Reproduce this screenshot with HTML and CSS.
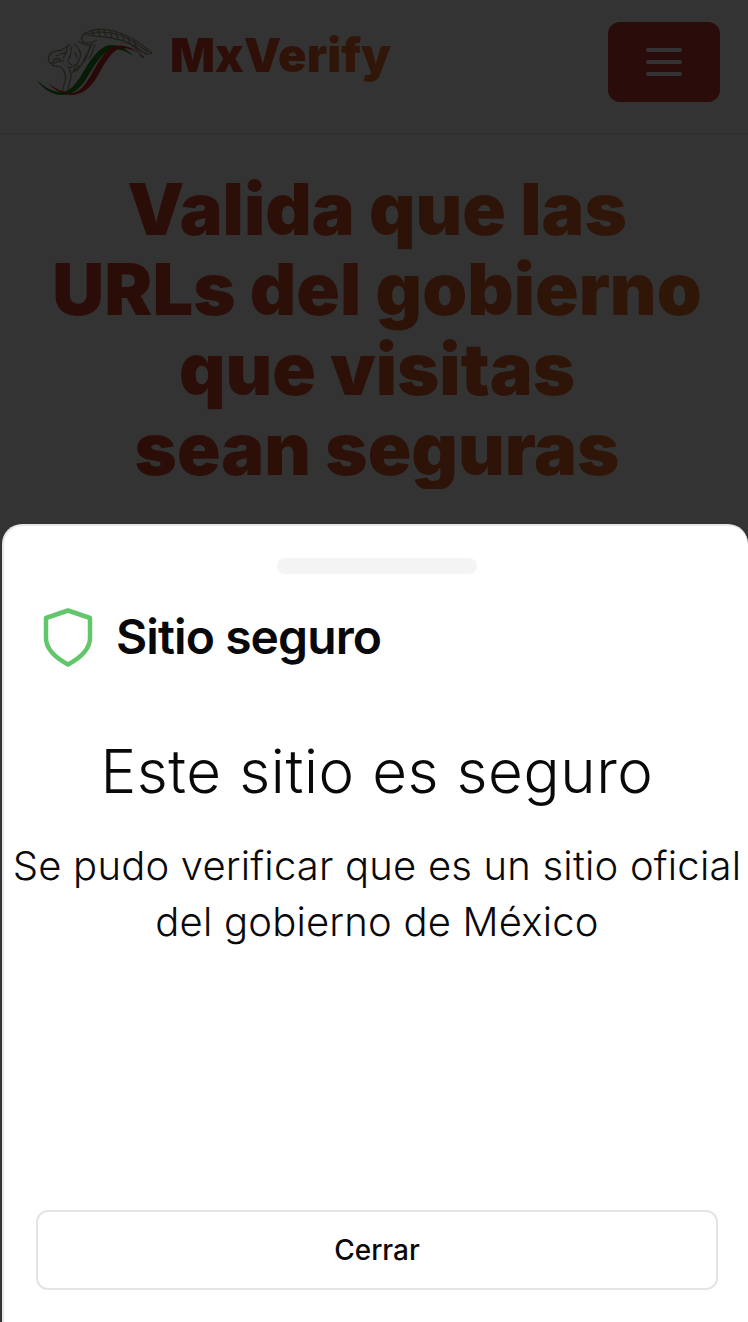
FILE: index.html
```html
<!DOCTYPE html>
<html lang="es">
<head>
<meta charset="utf-8">
<title>MxVerify</title>
<link rel="stylesheet" href="styles.css">
</head>
<body>
<div class="page">
  <header class="nav">
    <div class="brand">
      <svg class="logo" width="116" height="68" viewBox="36 28 116 68" fill="none" aria-hidden="true">
        <g class="eagle">
          <path d="M84 34C92 29 104 28 114 31C128 35 142 44 152 53C150 54 148 54 146 54C136 46 124 40 112 38C102 36 92 37 84 34Z"/>
          <path d="M88 34C98 31 110 32 122 36C132 40 140 46 148 52"/>
          <path d="M92 31L94 36M98 30L100 36M104 30L106 37M110 31L112 38M116 32L118 39M122 34L124 41M128 37L130 44M134 40L136 47"/>
          <path d="M139 55L144 58M131 44C136 48 140 52 144 58"/>
          <path d="M84 34C80 38 81 42 86 43C90 44 92 42 97 40"/>
          <path d="M78 41C84 45 89 46 92 44C90 50 86 54 84 60C82 65 79 68 76 72"/>
          <path d="M74 44C79 48 82 52 80 58C78 63 75 67 73 72C76 70 78 68 79 65"/>
          <path d="M90 46C88 52 88 56 84 62M95 44C93 50 92 54 89 59"/>
          <path d="M70 44C67 48 64 47 62 50C58 51 54 50 51 53C48 56 48 60 50 63C52 64 54 62 54 60C56 58 60 58 60 60C57 62 54 63 52 65C54 67 58 66 61 67"/>
          <path d="M72 46C70 51 72 54 69 58C67 61 69 64 72 65M66 52C64 54 62 54 60 54M67 47C67 52 65 56 63 58"/>
          <path d="M61 67C66 72 67 78 64 85C63 88 62 90 63 92"/>
          <path d="M68 66C72 72 72 78 69 84C68 87 68 89 69 91"/>
          <path d="M56 56L59 55M60 62L64 60M75 52L77 58M70 68L76 64"/>
        </g>
        <path class="green" d="M37 80C44 87 52 92 61 92C70 92 76 84 82 74C88 64 96 50 106 46C116 43 126 48 133 56C126 51 117 48 110 50C101 54 94 66 88 76C81 88 73 95 62 95C51 95 42 88 37 80Z"/>
        <path class="red" d="M48 83C54 88 62 92 70 93C80 93 85 85 91 75C97 64 105 50 114 46C122 44 132 47 139 53C132 49 124 47 118 49C110 53 103 66 97 77C91 87 83 95 71 95C62 94 53 89 48 83Z"/>
      </svg>
      <span class="brand-name">MxVerify</span>
    </div>
    <button class="menu" type="button" aria-label="Menú">
      <span class="bar"></span>
      <span class="bar"></span>
      <span class="bar"></span>
    </button>
  </header>
  <h1 class="hero">Valida que las<br>URLs del gobierno<br>que visitas<br>sean seguras</h1>
</div>
<div class="overlay"></div>
<section class="sheet">
  <div class="handle"></div>
  <div class="sheet-head">
    <svg class="shield" width="52" height="60" viewBox="0 0 52 60" fill="none" aria-hidden="true">
      <path d="M26 3.5L48 11V31C48 42 38 51 26 57.5C14 51 4 42 4 31V11Z" stroke="#62c76b" stroke-width="4.5" stroke-linejoin="round"/>
    </svg>
    <h2 class="sheet-title">Sitio seguro</h2>
  </div>
  <div class="sheet-body">
    <h3 class="status">Este sitio es seguro</h3>
    <p class="detail">Se pudo verificar que es un sitio oficial del gobierno de México</p>
  </div>
  <button class="close" type="button">Cerrar</button>
</section>
</body>
</html>
```
FILE: styles.css
```css
* { box-sizing: border-box; }
html, body { margin: 0; height: 100%; }
body {
  position: relative;
  width: 748px;
  height: 1322px;
  overflow: hidden;
  background: #fff;
  font-family: Inter, "Liberation Sans", sans-serif;
}
.nav {
  display: flex;
  align-items: center;
  justify-content: space-between;
  height: 135px;
  padding: 0 28px 10px 36px;
  border-bottom: 2px solid #eceef1;
}
.brand { display: flex; align-items: center; gap: 18px; }
.logo { display: block; }
.eagle path { stroke: #a09a80; stroke-width: 1.3; }
.green { fill: #1f8a1a; }
.red { fill: #d02a2a; }
.brand-name {
  margin-bottom: 14px;
  font-size: 47.2px;
  font-weight: 900;
  line-height: 56px;
  background: linear-gradient(90deg, #dc3a28, #ff8a30 130%);
  -webkit-background-clip: text;
  background-clip: text;
  color: transparent;
}
.menu {
  display: flex;
  flex-direction: column;
  align-items: center;
  justify-content: center;
  gap: 8px;
  width: 112px;
  height: 80px;
  border: 0;
  border-radius: 12px;
  background: #d24132;
}
.bar { width: 36px; height: 4px; border-radius: 2px; background: #fff; }
.hero {
  margin: 34px 0 0;
  padding-left: 6px;
  font-size: 72px;
  font-weight: 900;
  line-height: 80px;
  text-align: center;
  background: linear-gradient(90deg, #d23a28 5%, #ee7a2c 100%);
  -webkit-background-clip: text;
  background-clip: text;
  color: transparent;
}
.overlay {
  position: absolute;
  inset: 0;
  background: rgba(0, 0, 0, 0.8);
}
.sheet {
  position: absolute;
  left: 2px;
  right: 0;
  top: 524px;
  bottom: 0;
  display: flex;
  flex-direction: column;
  background: #fff;
  border: 2px solid #e5e7eb;
  border-bottom: 0;
  border-right: 0;
  border-radius: 20px 20px 0 0;
  padding: 32px 30px 32px 32px;
}
.handle {
  align-self: center;
  width: 200px;
  height: 16px;
  border-radius: 8px;
  background: #f4f4f5;
}
.sheet-head {
  display: flex;
  align-items: center;
  gap: 22px;
  margin-top: 33px;
  padding-left: 6px;
}
.shield { display: block; flex: none; }
.sheet-title {
  margin: 0;
  font-size: 48px;
  font-weight: 560;
  letter-spacing: -0.019em;
  line-height: 60px;
  color: #09090b;
}
.sheet-body {
  flex: 1;
  margin: 0 -30px 0 -32px;
  padding: 68px 0 0 2px;
  text-align: center;
  color: #09090b;
}
.status {
  margin: 0;
  font-size: 60px;
  font-weight: 350;
  letter-spacing: 0.6px;
  line-height: 72px;
}
.detail {
  margin: 31px 0 0;
  font-size: 40px;
  font-weight: 350;
  letter-spacing: 0.2px;
  line-height: 56px;
}
.close {
  height: 80px;
  border: 2px solid #e4e4e7;
  border-radius: 12px;
  background: #fff;
  font: 450 28px Inter, "Liberation Sans", sans-serif;
  color: #09090b;
}
```
